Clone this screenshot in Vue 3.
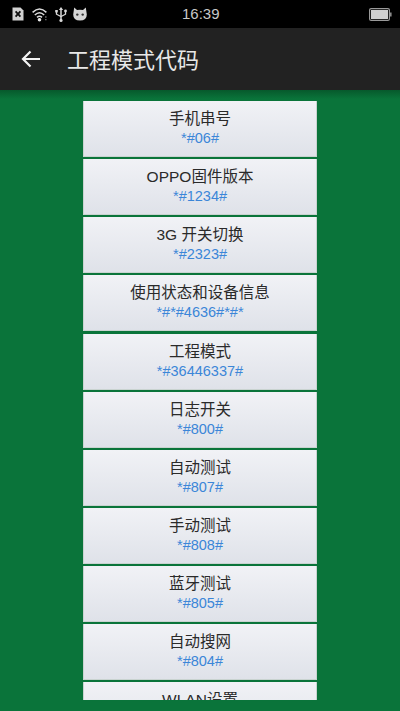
<template>
  <div class="page">
    <div class="status-bar">
      <div class="status-icons">
        <svg class="icon-sim" viewBox="0 0 12 14" width="12" height="14">
          <path d="M0.5 0.5H8.5L11.5 3.5V13.5H0.5Z" fill="#d2d2d2" />
          <path d="M3.6 4.4L8.4 9.6M8.4 4.4L3.6 9.6" stroke="#111" stroke-width="1.8" fill="none" />
        </svg>
        <svg class="icon-wifi" viewBox="0 0 16 15" width="16" height="15">
          <path d="M0.6 5.4Q7.5 -1.4 14.4 5.4" stroke="#dcdcdc" stroke-width="1.5" fill="none" />
          <path d="M2.8 8Q7.5 3.4 12.2 8" stroke="#dcdcdc" stroke-width="1.5" fill="none" />
          <path d="M5 10.4Q7.5 8.2 10 10.4" stroke="#dcdcdc" stroke-width="1.5" fill="none" />
          <circle cx="7.5" cy="12.8" r="1.8" fill="#e8e8e8" />
          <path d="M13 10h1.6M13 12.6h1.6" stroke="#6a6a6a" stroke-width="1.3" />
        </svg>
        <svg class="icon-usb" viewBox="0 0 12 15" width="12" height="15">
          <path d="M6 1.5V14" stroke="#d8d8d8" stroke-width="1.5" />
          <path d="M6 0L8.2 3H3.8Z" fill="#d8d8d8" />
          <path d="M1.5 4.5V7.2L6 9.6L10.5 7.2V4.5" stroke="#d8d8d8" stroke-width="1.3" fill="none" />
          <rect x="0.2" y="3" width="2.6" height="2.4" fill="#d8d8d8" />
          <circle cx="10.5" cy="4" r="1.4" fill="#d8d8d8" />
          <circle cx="6" cy="13.4" r="1.6" fill="#d8d8d8" />
        </svg>
        <svg class="icon-cat" viewBox="0 0 14 14" width="14" height="14">
          <path d="M1.2 0.4L4 3Q7 2.3 10 3L12.8 0.4L13.8 7.5Q13.8 13.6 7 13.6Q0.2 13.6 0.2 7.5Z" fill="#d6d6d6" />
          <circle cx="4.3" cy="7.6" r="1.2" fill="#333" />
          <circle cx="9.7" cy="7.6" r="1.2" fill="#333" />
        </svg>
      </div>
      <span class="clock">16:39</span>
      <svg class="icon-battery" viewBox="0 0 23 13" width="23" height="13">
        <rect x="0.6" y="0.6" width="19.8" height="11.8" rx="1.5" fill="none" stroke="#9a9a9a" stroke-width="1.2" />
        <rect x="2" y="2" width="17" height="9" fill="#cfcfcf" />
        <rect x="21" y="4.5" width="1.6" height="4" fill="#8a8a8a" />
      </svg>
    </div>

    <header class="toolbar">
      <svg class="icon-back" viewBox="0 0 20 18" width="20" height="18">
        <path d="M2 9H19M9.5 1.5L2 9L9.5 16.5" stroke="#f4f4f4" stroke-width="2.2" fill="none" />
      </svg>
      <h1 class="title">工程模式代码</h1>
    </header>

    <main class="content">
      <ul class="code-list">
        <li v-for="item in codes" :key="item.name" class="code-item">
          <span class="code-name">{{ item.name }}</span>
          <span class="code-value">{{ item.code }}</span>
        </li>
      </ul>
    </main>
  </div>
</template>

<script setup>
const codes = [
  { name: "手机串号", code: "*#06#" },
  { name: "OPPO固件版本", code: "*#1234#" },
  { name: "3G 开关切换", code: "*#2323#" },
  { name: "使用状态和设备信息", code: "*#*#4636#*#*" },
  { name: "工程模式", code: "*#36446337#" },
  { name: "日志开关", code: "*#800#" },
  { name: "自动测试", code: "*#807#" },
  { name: "手动测试", code: "*#808#" },
  { name: "蓝牙测试", code: "*#805#" },
  { name: "自动搜网", code: "*#804#" },
  { name: "WLAN设置", code: "*#801#" },
];
</script>

<style>
html,
body {
  margin: 0;
  background: #0a743a;
}
</style>

<style scoped>
.page {
  width: 400px;
  height: 711px;
  display: flex;
  flex-direction: column;
  overflow: hidden;
  font-family: "Liberation Sans", "Noto Sans CJK SC", sans-serif;
}

.status-bar {
  height: 28px;
  flex: none;
  background: #000;
  display: flex;
  align-items: center;
  justify-content: space-between;
  padding: 0 8px 0 12px;
  position: relative;
}

.status-icons {
  display: flex;
  align-items: center;
}

.icon-wifi {
  margin-left: 8px;
}

.icon-usb {
  margin-left: 7px;
}

.icon-cat {
  margin-left: 6px;
}

.clock {
  position: absolute;
  left: 182px;
  top: 5px;
  font-size: 15px;
  line-height: 18px;
  color: #c8c8c8;
}

.toolbar {
  height: 62px;
  flex: none;
  background: #222;
  display: flex;
  align-items: center;
  padding-left: 21px;
  box-sizing: border-box;
}

.title {
  margin: 0 0 3px 26px;
  font-size: 22px;
  font-weight: 400;
  color: #e8e8e8;
}

.content {
  flex: 1;
  min-height: 0;
  padding: 11px 83px;
  background: linear-gradient(#06592c, #0a743a 9px);
  display: flex;
}

.code-list {
  list-style: none;
  margin: 0;
  padding: 0;
  width: 234px;
  overflow: hidden;
  display: flex;
  flex-direction: column;
  gap: 2.13px;
}

.code-item {
  height: 56px;
  flex: none;
  box-sizing: border-box;
  padding-top: 8px;
  display: flex;
  flex-direction: column;
  align-items: center;
  background: linear-gradient(#f1f2f6, #dfe2e9);
  border: 1px solid #c9d3d0;
  border-width: 0 1px 1px;
}

.code-name {
  font-size: 15.5px;
  line-height: 20px;
  color: #2a2a2a;
}

.code-value {
  font-size: 14.5px;
  line-height: 18px;
  color: #3b86d8;
}
</style>
